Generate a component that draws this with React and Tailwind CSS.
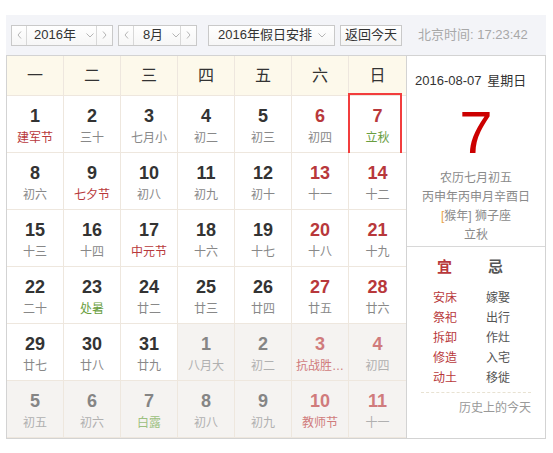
import React from 'react';

const CN = { fontFamily: '"Liberation Sans", "Noto Sans CJK SC", sans-serif' };

// t: 0 normal, 1 festival (red), 2 solar term (green)
const weeks = [
  [[1, '建军节', 1], [2, '三十'], [3, '七月小'], [4, '初二'], [5, '初三'], [6, '初四'], [7, '立秋', 2]],
  [[8, '初六'], [9, '七夕节', 1], [10, '初八'], [11, '初九'], [12, '初十'], [13, '十一'], [14, '十二']],
  [[15, '十三'], [16, '十四'], [17, '中元节', 1], [18, '十六'], [19, '十七'], [20, '十八'], [21, '十九']],
  [[22, '二十'], [23, '处暑', 2], [24, '廿二'], [25, '廿三'], [26, '廿四'], [27, '廿五'], [28, '廿六']],
  [[29, '廿七'], [30, '廿八'], [31, '廿九'], [1, '八月大', 0, true], [2, '初二', 0, true], [3, '抗战胜…', 1, true], [4, '初四', 0, true]],
  [[5, '初五', 0, true], [6, '初六', 0, true], [7, '白露', 2, true], [8, '初八', 0, true], [9, '初九', 0, true], [10, '教师节', 1, true], [11, '十一', 0, true]],
];

const yi = ['安床', '祭祀', '拆卸', '修造', '动土'];
const ji = ['嫁娶', '出行', '作灶', '入宅', '移徙'];

function Left() {
  return (
    <svg width="5" height="8" viewBox="0 0 5 8" className="block">
      <polyline points="4,0.5 1,4 4,7.5" fill="none" stroke="#b5b5b5" strokeWidth="1" />
    </svg>
  );
}

function Right() {
  return (
    <svg width="5" height="8" viewBox="0 0 5 8" className="block">
      <polyline points="1,0.5 4,4 1,7.5" fill="none" stroke="#b5b5b5" strokeWidth="1" />
    </svg>
  );
}

function Down() {
  return (
    <svg width="8" height="5" viewBox="0 0 8 5" className="block">
      <polyline points="0.5,0.5 4,4 7.5,0.5" fill="none" stroke="#b5b5b5" strokeWidth="1" />
    </svg>
  );
}

function Stepper({ label, width, textWidth }) {
  return (
    <div className={`flex h-[21px] ${width} border border-[#c9c9c9] bg-gradient-to-b from-white to-[#f6f6f6]`}>
      <div className="w-[15px] flex items-center justify-center border-r border-[#d8d8d8]"><Left /></div>
      <div className={`${textWidth} flex items-center justify-center text-[13px] text-[#333]`}>{label}</div>
      <div className="flex-1 flex items-center justify-center border-r border-[#d8d8d8]"><Down /></div>
      <div className="w-[15px] flex items-center justify-center"><Right /></div>
    </div>
  );
}

function DayCell({ day, row, col }) {
  const [n, lunar, t = 0, other = false] = day;
  const weekend = col >= 5;
  const today = row === 0 && col === 6;
  let numColor = weekend ? 'text-[#b8383b]' : 'text-[#333]';
  let lunarColor = t === 1 ? 'text-[#b8383b]' : t === 2 ? 'text-[#6a9e3f]' : 'text-[#888]';
  if (other) {
    numColor = weekend ? 'text-[#d07b7c]' : 'text-[#858585]';
    lunarColor = t === 1 ? 'text-[#d07b7c]' : t === 2 ? 'text-[#9cc080]' : 'text-[#b0b0b0]';
  }
  return (
    <div className={`relative h-[57px] flex flex-col items-center pt-[9px] border-b border-[#eee7de] ${col < 6 ? 'border-r' : ''} ${other ? 'bg-[#f5f3f1]' : 'bg-white'}`}>
      <div className={`text-[18px] leading-[22px] font-bold ${numColor}`}>{n}</div>
      <div className={`mt-[3px] text-[12px] leading-[16px] ${lunarColor}`}>{lunar}</div>
      {today && <div className="absolute -top-[3px] -left-px w-[54px] h-[66px] border-2 border-[#f23d3d]" />}
    </div>
  );
}

export default function App() {
  return (
    <div className="min-h-[453px] bg-white pt-[15px] pl-[6px]" style={CN}>
      <div className="w-[540px]">
        <div className="h-[41px] bg-[#f3f4f8] border-b border-[#d3d3d3] flex items-center pl-[5px]">
          <Stepper label="2016年" width="w-[102px]" textWidth="w-[56px]" />
          <div className="w-[5px]" />
          <Stepper label="8月" width="w-[79px]" textWidth="w-[38px]" />
          <div className="w-[11px]" />
          <div className="flex items-center h-[21px] w-[127px] border border-[#c9c9c9] bg-gradient-to-b from-white to-[#f6f6f6] pl-[9px] pr-[8px]">
            <span className="text-[13px] text-[#333] flex-1">2016年假日安排</span>
            <Down />
          </div>
          <div className="w-[5px]" />
          <div className="flex items-center justify-center h-[21px] w-[62px] border border-[#c9c9c9] bg-gradient-to-b from-white to-[#f4f4f4] text-[13px] text-[#333]">
            返回今天
          </div>
          <div className="ml-[16px] text-[13px] text-[#a8a8a8]">北京时间: 17:23:42</div>
        </div>

        <div className="flex border-l border-r border-b border-[#d3d3d3]">
          <div className="w-[399px]">
            <div className="grid grid-cols-[repeat(7,57px)] bg-[#fdf9eb]">
              {['一', '二', '三', '四', '五', '六', '日'].map((w, i) => (
                <div key={w} className={`h-[40px] flex items-center justify-center text-[16px] text-[#333] border-b border-[#eee7de] ${i < 6 ? 'border-r' : ''}`}>
                  {w}
                </div>
              ))}
            </div>
            <div className="grid grid-cols-[repeat(7,57px)]">
              {weeks.map((wk, r) => wk.map((d, c) => <DayCell key={`${r}-${c}`} day={d} row={r} col={c} />))}
            </div>
          </div>

          <div className="flex-1 border-l border-[#d3d3d3] flex flex-col">
            <div className="h-[190px] flex flex-col items-center">
              <div className="self-start pl-[8px] pt-[16px] text-[13px] leading-[17px] text-[#333]">
                2016-08-07 <span className="ml-[2px]">星期日</span>
              </div>
              <div className="mt-[11px] text-[60px] leading-[66px] text-[#cc0000]">7</div>
              <div className="mt-[3px] text-[12px] leading-[19px] text-[#8a8a8a] text-center">
                <div>农历七月初五</div>
                <div>丙申年丙申月辛酉日</div>
                <div><span className="text-[#e8a24a]">[</span>猴年] 狮子座</div>
                <div>立秋</div>
              </div>
            </div>
            <div className="border-t border-[#d8d8d8] flex-1 px-[14px]">
              <div className="flex pl-[12px] pt-[10px]">
                <div className="w-[53px]">
                  <div className="text-[15px] leading-[20px] font-bold text-[#b8383b] pl-[4px]">宜</div>
                  <div className="mt-[11px]">
                    {yi.map((s) => <div key={s} className="text-[12px] leading-[20px] text-[#b8383b]">{s}</div>)}
                  </div>
                </div>
                <div>
                  <div className="text-[15px] leading-[20px] font-bold text-[#555] pl-[2px]">忌</div>
                  <div className="mt-[11px]">
                    {ji.map((s) => <div key={s} className="text-[12px] leading-[20px] text-[#555]">{s}</div>)}
                  </div>
                </div>
              </div>
              <div className="mt-[4px] border-t border-dashed border-[#e8e2d2]" />
              <div className="mt-[7px] text-right text-[12px] leading-[16px] text-[#999]">历史上的今天</div>
            </div>
          </div>
        </div>
      </div>
    </div>
  );
}
